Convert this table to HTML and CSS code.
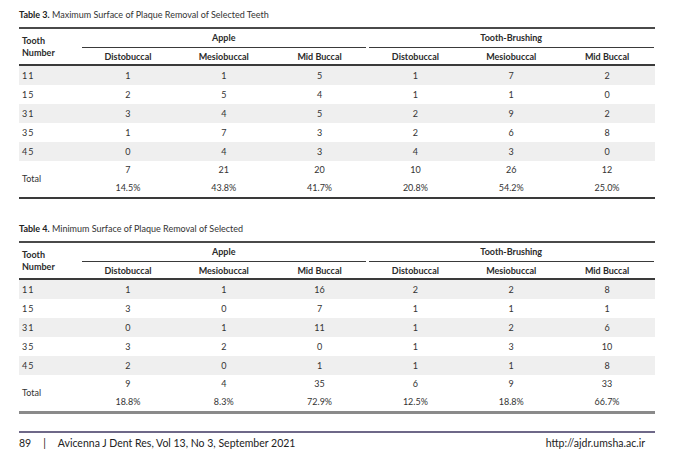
FILE: index.html
```html
<!DOCTYPE html>
<html lang="en">
<head>
    <meta charset="UTF-8">
    <title>Plaque Removal Tables</title>
    <link rel="stylesheet" href="styles.css">
</head>
<body>
    <div class="page">
        <p class="caption"><b>Table 3.</b> Maximum Surface of Plaque Removal of Selected Teeth</p>
        <table class="data">
            <colgroup>
                <col class="first">
                <col><col><col><col><col><col>
            </colgroup>
            <thead>
                <tr class="group-row">
                    <th class="tooth" rowspan="2">Tooth<br>Number</th>
                    <th class="group" colspan="3">Apple</th>
                    <th class="group" colspan="3">Tooth-Brushing</th>
                </tr>
                <tr class="sub-row">
                    <th>Distobuccal</th>
                    <th>Mesiobuccal</th>
                    <th>Mid Buccal</th>
                    <th>Distobuccal</th>
                    <th>Mesiobuccal</th>
                    <th>Mid Buccal</th>
                </tr>
            </thead>
            <tbody>
                <tr class="odd"><td class="label">11</td><td>1</td><td>1</td><td>5</td><td>1</td><td>7</td><td>2</td></tr>
                <tr><td class="label">15</td><td>2</td><td>5</td><td>4</td><td>1</td><td>1</td><td>0</td></tr>
                <tr class="odd"><td class="label">31</td><td>3</td><td>4</td><td>5</td><td>2</td><td>9</td><td>2</td></tr>
                <tr><td class="label">35</td><td>1</td><td>7</td><td>3</td><td>2</td><td>6</td><td>8</td></tr>
                <tr class="odd"><td class="label">45</td><td>0</td><td>4</td><td>3</td><td>4</td><td>3</td><td>0</td></tr>
                <tr class="total"><td class="label" rowspan="2">Total</td><td>7</td><td>21</td><td>20</td><td>10</td><td>26</td><td>12</td></tr>
                <tr class="total last"><td>14.5%</td><td>43.8%</td><td>41.7%</td><td>20.8%</td><td>54.2%</td><td>25.0%</td></tr>
            </tbody>
        </table>

        <p class="caption second"><b>Table 4.</b> Minimum Surface of Plaque Removal of Selected</p>
        <table class="data light-end">
            <colgroup>
                <col class="first">
                <col><col><col><col><col><col>
            </colgroup>
            <thead>
                <tr class="group-row">
                    <th class="tooth" rowspan="2">Tooth<br>Number</th>
                    <th class="group" colspan="3">Apple</th>
                    <th class="group" colspan="3">Tooth-Brushing</th>
                </tr>
                <tr class="sub-row">
                    <th>Distobuccal</th>
                    <th>Mesiobuccal</th>
                    <th>Mid Buccal</th>
                    <th>Distobuccal</th>
                    <th>Mesiobuccal</th>
                    <th>Mid Buccal</th>
                </tr>
            </thead>
            <tbody>
                <tr class="odd"><td class="label">11</td><td>1</td><td>1</td><td>16</td><td>2</td><td>2</td><td>8</td></tr>
                <tr><td class="label">15</td><td>3</td><td>0</td><td>7</td><td>1</td><td>1</td><td>1</td></tr>
                <tr class="odd"><td class="label">31</td><td>0</td><td>1</td><td>11</td><td>1</td><td>2</td><td>6</td></tr>
                <tr><td class="label">35</td><td>3</td><td>2</td><td>0</td><td>1</td><td>3</td><td>10</td></tr>
                <tr class="odd"><td class="label">45</td><td>2</td><td>0</td><td>1</td><td>1</td><td>1</td><td>8</td></tr>
                <tr class="total"><td class="label" rowspan="2">Total</td><td>9</td><td>4</td><td>35</td><td>6</td><td>9</td><td>33</td></tr>
                <tr class="total last"><td>18.8%</td><td>8.3%</td><td>72.9%</td><td>12.5%</td><td>18.8%</td><td>66.7%</td></tr>
            </tbody>
        </table>

        <div class="footer">
            <span class="issue"><span class="num">89</span><span class="bar">|</span>Avicenna J Dent Res, Vol 13, No 3, September 2021</span>
            <span class="url">http://ajdr.umsha.ac.ir</span>
        </div>
    </div>
</body>
</html>
```

FILE: styles.css
```css
body {
    margin: 0;
    background: #fff;
    font-family: Lato, "Open Sans", sans-serif;
    color: #333;
}
.page {
    width: 636px;
    padding: 9px 0 0 19px;
}
.caption {
    margin: 0;
    height: 12px;
    font-size: 9px;
    line-height: 12px;
    color: #333;
}
.caption b {
    color: #222;
}
.caption.second {
    margin-top: 24px;
}
.data {
    width: 636px;
    margin-top: 6px;
    table-layout: fixed;
    border-collapse: separate;
    border-spacing: 0;
    border-top: 2px solid #4a4a4a;
    font-size: 9px;
}
.data col.first {
    width: 61px;
}
.data th {
    padding: 0;
    font-weight: bold;
    color: #2b2b2b;
    text-align: center;
    line-height: 12px;
}
.group-row th {
    height: 18px;
    vertical-align: middle;
}
.group-row th.group {
    background: linear-gradient(#3a3a3a, #3a3a3a) center bottom / calc(100% - 3px) 1px no-repeat;
    padding-bottom: 1px;
}
.data th.tooth {
    text-align: left;
    padding: 1px 0 0 3px;
    border-bottom: 2px solid #3a3a3a;
}
.sub-row th {
    height: 15px;
    border-bottom: 2px solid #3a3a3a;
    padding-top: 1px;
}
.data td {
    padding: 0;
    height: 19px;
    text-align: center;
    line-height: 19px;
    color: #333;
}
.data td.label {
    text-align: left;
    padding-left: 3px;
    letter-spacing: 1px;
}
.data tr.odd td {
    background: #efefef;
}
.data tr.total td {
    height: 18px;
    line-height: 18px;
}
.data tr.total td.label {
    letter-spacing: 0;
}
.data tr.last td {
    border-bottom: 2px solid #3a3a3a;
}
.data.light-end tr.last td {
    border-bottom: 3px solid #8a8a8a;
}
.data tr.total td.label {
    border-bottom: 2px solid #3a3a3a;
}
.data.light-end tr.total td.label {
    border-bottom: 3px solid #8a8a8a;
}
.footer {
    margin-top: 17px;
    border-top: 2px solid #6e6888;
    display: flex;
    justify-content: space-between;
    padding: 3px 10px 0 0;
    font-size: 10.5px;
    line-height: 14px;
    color: #222;
}
.footer .bar {
    margin: 0 12px 0 12px;
}
```
